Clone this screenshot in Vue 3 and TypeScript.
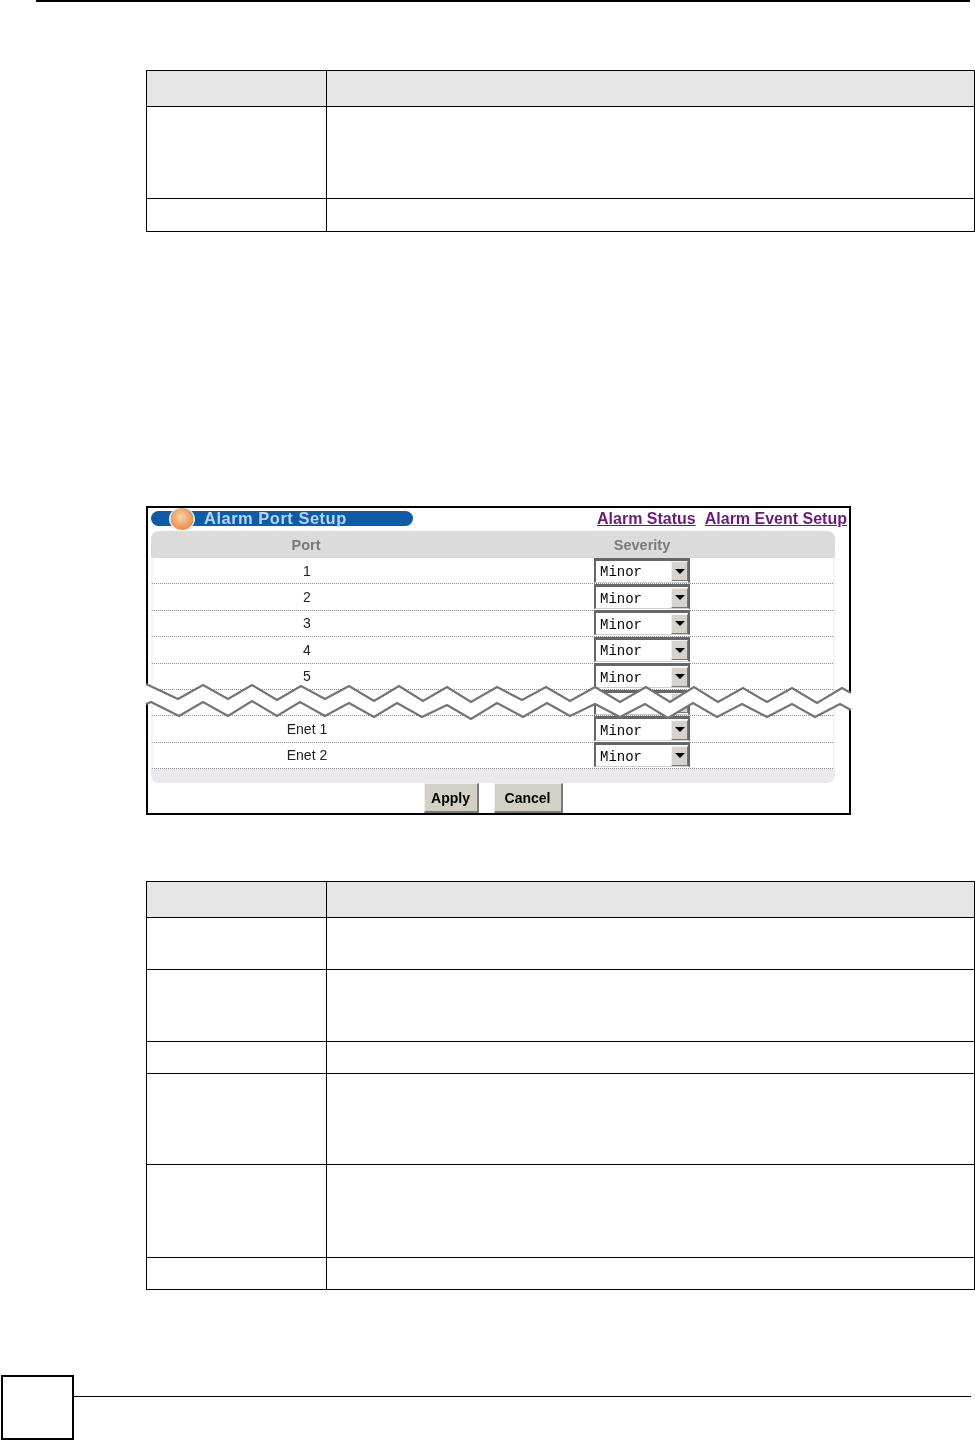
<script setup lang="ts">
const upper: [number, number][] = [[146,684],[178,699],[203,685],[228,699],[252,685],[277,700],[301,686],[325,699],[349,686],[374,701],[399,686],[423,701],[447,687],[471,702],[497,687],[522,700],[546,687],[570,701],[595,687],[620,702],[646,687],[670,702],[694,687],[718,702],[743,688],[767,702],[792,688],[817,703],[842,688],[851,693]]
const lower: [number, number][] = [[146,704],[151,702],[179,716],[203,702],[228,716],[252,701],[277,716],[300,702],[325,716],[349,703],[374,717],[397,703],[422,717],[447,705],[471,719],[497,703],[523,717],[547,703],[570,716],[595,704],[620,717],[645,704],[668,718],[693,703],[717,717],[742,704],[767,717],[792,704],[815,717],[840,704],[851,710]]
const toPts = (a: [number, number][]) => a.map(p => p.join(',')).join(' ')
const upperPts = toPts(upper)
const lowerPts = toPts(lower)
const fillPts = toPts([...upper, ...[...lower].reverse()])

const table1 = [36, 92, 33]
const table2 = [36, 52, 72, 32, 91, 93, 32]
const rows = ['1', '2', '3', '4', '5', '', 'Enet 1', 'Enet 2']
</script>

<template>
  <div class="page">
    <div class="top-rule"></div>

    <div class="doc-table first">
      <div
        v-for="(h, i) in table1"
        :key="i"
        class="doc-row"
        :class="{ head: i === 0 }"
        :style="{ height: h + 'px' }"
      >
        <div class="doc-cell left"></div>
        <div class="doc-cell"></div>
      </div>
    </div>

    <div class="shot">
      <div class="shot-head soft">
        <div class="title-bar">
          <span class="orb"></span>
          <span class="title-text">Alarm Port Setup</span>
        </div>
        <div class="links">
          <a class="link">Alarm Status</a>
          <a class="link">Alarm Event Setup</a>
        </div>
      </div>

      <div class="grid-wrap soft">
        <div class="grid-head">
          <div class="col-port">Port</div>
          <div class="col-sev"><span class="sev-inner">Severity</span></div>
        </div>
        <div v-for="(r, i) in rows" :key="i" class="grid-row">
          <div class="col-port">{{ r }}</div>
          <div class="col-sev">
            <div class="sel">
              <span class="sel-text">{{ r ? 'Minor' : '' }}</span>
              <span class="sel-btn"><i class="arrow"></i></span>
            </div>
          </div>
        </div>
        <div class="grid-foot"></div>
        <div class="actions">
          <button class="btn apply">Apply</button>
          <button class="btn cancel">Cancel</button>
        </div>
      </div>

      <svg class="zigzag" viewBox="146 680 705 45" width="705" height="45">
        <polygon :points="fillPts" fill="#fff" />
        <polyline :points="upperPts" fill="none" stroke="#747474" stroke-width="2.2" />
        <polyline :points="lowerPts" fill="none" stroke="#747474" stroke-width="2.2" />
      </svg>
    </div>

    <div class="doc-table second">
      <div
        v-for="(h, i) in table2"
        :key="i"
        class="doc-row"
        :class="{ head: i === 0 }"
        :style="{ height: h + 'px' }"
      >
        <div class="doc-cell left"></div>
        <div class="doc-cell"></div>
      </div>
    </div>

    <div class="footer">
      <div class="page-box"></div>
      <div class="footer-rule"></div>
    </div>
  </div>
</template>

<style scoped>
.page {
  width: 975px;
  height: 1440px;
  background: #fff;
  overflow: hidden;
  font-family: "Liberation Sans", Arial, sans-serif;
}
.top-rule {
  height: 2px;
  margin-left: 36px;
  width: 934px;
  background: #000;
}
.doc-table {
  margin-left: 146px;
  width: 829px;
  border-top: 1px solid #000;
  border-right: 1px solid #000;
  box-sizing: border-box;
}
.first { margin-top: 68px; }
.second { margin-top: 66px; }
.doc-row {
  display: flex;
  box-sizing: border-box;
  border-bottom: 1px solid #000;
  border-left: 1px solid #000;
}
.doc-row.head { background: #e5e5e5; }
.doc-cell { flex: 1; }
.doc-cell.left {
  flex: 0 0 179px;
  border-right: 1px solid #000;
}
.shot {
  position: relative;
  box-sizing: border-box;
  width: 705px;
  height: 309px;
  margin: 274px 0 0 146px;
  border: 2px solid #000;
}
.soft { filter: blur(0.3px); }
.shot-head {
  display: flex;
  justify-content: space-between;
  align-items: flex-start;
  height: 23px;
  padding: 3px 2px 0 3px;
  box-sizing: border-box;
}
.title-bar {
  position: relative;
  width: 262px;
  height: 15px;
  border-radius: 8px;
  background: #0f5ca6;
  display: flex;
  align-items: center;
  padding-left: 53px;
  box-sizing: border-box;
}
.orb {
  position: absolute;
  left: 20px;
  top: -3px;
  width: 22px;
  height: 22px;
  border-radius: 50%;
  box-sizing: border-box;
  background: radial-gradient(circle at 45% 40%, #fbd3b0 0%, #f3a56b 45%, #e07a30 100%);
  box-shadow: -2px 0 0 0 #e8eef6, 2px 0 0 0 #d9e5f2;
}
.title-text {
  color: #b5d5f5;
  font-size: 16.5px;
  font-weight: 700;
  white-space: nowrap;
  letter-spacing: 0.5px;
  line-height: 15px;
}
.links {
  display: flex;
  gap: 9px;
}
.link {
  color: #6b1a7c;
  font-size: 16px;
  font-weight: 700;
  text-decoration: underline;
  white-space: nowrap;
  line-height: 15px;
}
.grid-wrap {
  width: 684px;
  margin-left: 3px;
}
.grid-head {
  display: flex;
  align-items: center;
  height: 27px;
  background: #dcdbdc;
  border-radius: 8px 8px 0 0;
  color: #7a7a7a;
  font-size: 14.5px;
  font-weight: 700;
}
.col-port {
  width: 310px;
  text-align: center;
  flex: none;
}
.col-sev {
  padding-left: 133px;
  width: 96px;
  flex: none;
}
.sev-inner {
  display: block;
  text-align: center;
}
.grid-row {
  display: flex;
  align-items: center;
  height: 26.4px;
  box-sizing: border-box;
  border-bottom: 1px dotted #8c8c8c;
  border-left: 2px solid #f6f2f8;
  border-right: 2px solid #f6f2f8;
  color: #222;
  font-size: 14px;
}
.grid-row .col-port { width: 308px; }
.sel {
  display: flex;
  align-items: center;
  justify-content: space-between;
  box-sizing: border-box;
  width: 96px;
  height: 25px;
  margin-top: -1px;
  background: #fff;
  border: 2px solid #666;
  border-top-width: 3px;
  border-bottom: 1px solid #cfcfcf;
  padding: 0 0 0 4px;
}
.sel-text {
  font-family: "Liberation Mono", "Courier New", monospace;
  font-size: 14px;
  color: #000;
  font-weight: 400;
  padding-top: 2px;
}
.sel-btn {
  display: flex;
  align-items: center;
  justify-content: center;
  box-sizing: border-box;
  width: 17px;
  height: 20px;
  background: #d6d2cc;
  border-top: 1px solid #f4f2ef;
  border-left: 1px solid #f4f2ef;
  border-right: 1px solid #777;
  border-bottom: 1px solid #777;
}
.arrow {
  display: block;
  width: 0;
  height: 0;
  border-left: 5px solid transparent;
  border-right: 5px solid transparent;
  border-top: 5px solid #000;
}
.grid-foot {
  height: 14px;
  background: #ece9ee;
  border-radius: 0 0 8px 8px;
}
.actions {
  display: flex;
  justify-content: center;
  gap: 15px;
  margin-top: 0;
}
.btn {
  height: 30px;
  padding: 0;
  font-family: "Liberation Sans", Arial, sans-serif;
  font-size: 14px;
  font-weight: 700;
  color: #000;
  background: #d4d0c8;
  border: 0;
  border-top: 1px solid #f1efea;
  border-left: 1px solid #f1efea;
  border-right: 2px solid #7b7b7b;
  border-bottom: 2px solid #7b7b7b;
  box-sizing: border-box;
}
.apply { width: 55px; }
.cancel { width: 69px; }
.zigzag {
  position: absolute;
  left: -2px;
  top: 172px;
  overflow: visible;
  display: block;
  filter: blur(0.35px);
}
.footer {
  display: flex;
  margin-top: 85px;
}
.page-box {
  box-sizing: border-box;
  width: 73px;
  height: 65px;
  border: 2px solid #000;
  flex: none;
  margin-left: 1px;
}
.footer-rule {
  margin-top: 21px;
  width: 897px;
  height: 1px;
  background: #000;
}
</style>
